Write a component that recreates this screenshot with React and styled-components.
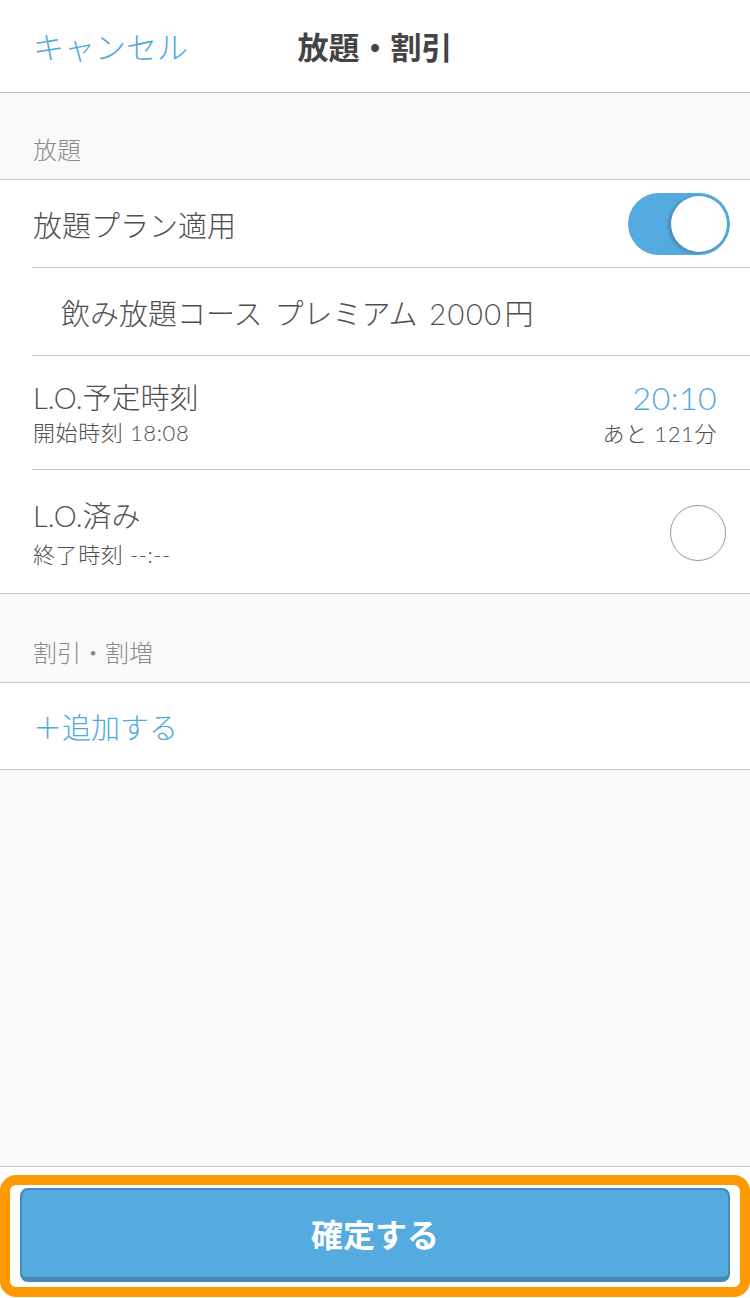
import React from 'react';
import styled, { createGlobalStyle } from 'styled-components';

const GlobalStyle = createGlobalStyle`
  html, body {
    margin: 0;
    padding: 0;
    background: #ffffff;
  }
  * {
    box-sizing: border-box;
    font-family: "Lato", "Noto Sans CJK JP", sans-serif;
  }
`;

const Page = styled.div`
  display: flex;
  flex-direction: column;
  height: 1298px;
  background: #f9f9f9;
`;

const Header = styled.div`
  display: grid;
  grid-template-columns: 1fr auto 1fr;
  align-items: center;
  height: 93px;
  padding-bottom: 2px;
  background: #ffffff;
  border-bottom: 1px solid #b8b8b8;
`;

const Cancel = styled.span`
  padding-left: 33px;
  font-size: 31px;
  font-weight: 300;
  color: #52a9dd;
`;

const Title = styled.h1`
  margin: 0;
  font-size: 31px;
  font-weight: 700;
  color: #444444;
`;

const SectionHead = styled.div`
  display: flex;
  align-items: flex-end;
  height: ${p => p.$h}px;
  padding: 0 0 13px 33px;
  font-size: 24px;
  font-weight: 300;
  color: #8a8a8a;
  border-bottom: 1px solid #c8c8c8;
`;

const Group = styled.div`
  background: #ffffff;
  border-bottom: 1px solid #c8c8c8;
`;

const Row = styled.div`
  display: flex;
  align-items: center;
  justify-content: space-between;
  height: ${p => p.$h}px;
  margin-left: 32px;
  padding-top: ${p => p.$top || 0}px;
  padding-left: ${p => p.$indent || 1}px;
  padding-right: 20px;
  border-bottom: ${p => (p.$last ? 'none' : '1px solid #c8c8c8')};
`;

const Label = styled.span`
  font-size: 29px;
  font-weight: 300;
  color: ${p => (p.$blue ? '#52a9dd' : '#4f4f4f')};
  word-spacing: 4px;
`;

const Num = styled.span`
  letter-spacing: 1.5px;
  margin-right: 2px;
`;

const Stack = styled.div`
  display: flex;
  flex-direction: column;
  align-items: ${p => (p.$right ? 'flex-end' : 'flex-start')};
  gap: ${p => p.$gap || 2}px;
`;

const Main = styled.span`
  font-size: 29px;
  font-weight: 300;
  line-height: 36px;
  color: #4f4f4f;
`;

const Time = styled.span`
  font-size: 32px;
  font-weight: 300;
  line-height: 38px;
  color: #4ea8dd;
  margin-right: 13px;
  letter-spacing: 0.5px;
`;

const Sub = styled.span`
  font-size: 22px;
  font-weight: 300;
  line-height: 30px;
  color: #4f4f4f;
  letter-spacing: 0.6px;
  margin-right: ${p => p.$mr || 0}px;
`;

const Toggle = styled.div`
  display: flex;
  justify-content: flex-end;
  align-items: center;
  width: 102px;
  height: 62px;
  padding: 3px;
  border-radius: 31px;
  background: #55abe0;
`;

const Knob = styled.div`
  width: 56px;
  height: 56px;
  border-radius: 50%;
  background: #ffffff;
  box-shadow: -2px 1px 4px rgba(0, 0, 0, 0.25);
`;

const Check = styled.div`
  width: 56px;
  height: 56px;
  margin-right: 4px;
  margin-top: -2px;
  border-radius: 50%;
  border: 1px solid #999999;
  background: #ffffff;
`;

const Filler = styled.div`
  flex: 1;
  border-bottom: 1px solid #c8c8c8;
`;

const Footer = styled.div`
  height: 131px;
  padding: 8px 0 1px;
  background: #ffffff;
`;

const Frame = styled.div`
  height: 100%;
  padding: 3px 10px 5px;
  border: 10px solid #ff9900;
  border-radius: 16px;
  background: #ffffff;
`;

const Confirm = styled.button`
  display: flex;
  align-items: center;
  justify-content: center;
  width: 100%;
  height: 100%;
  border: 2px solid #4589b9;
  border-bottom-width: 5px;
  border-radius: 8px;
  background: #55abe0;
  color: #ffffff;
  font-size: 32px;
  font-weight: 700;
  padding: 0 0 2px;
`;

export default function App() {
  return (
    <>
      <GlobalStyle />
      <Page>
        <Header>
          <Cancel>キャンセル</Cancel>
          <Title>放題・割引</Title>
          <span />
        </Header>

        <SectionHead $h={87}>放題</SectionHead>
        <Group>
          <Row $h={88}>
            <Label>放題プラン適用</Label>
            <Toggle>
              <Knob />
            </Toggle>
          </Row>
          <Row $h={88} $indent={29}>
            <Label>
              飲み放題コース プレミアム <Num>2000</Num>円
            </Label>
          </Row>
          <Row $h={114} $top={2}>
            <Stack $gap={2}>
              <Main>L.O.予定時刻</Main>
              <Sub>開始時刻 18:08</Sub>
            </Stack>
            <Stack $right $gap={2}>
              <Time>20:10</Time>
              <Sub $mr={13}>あと 121分</Sub>
            </Stack>
          </Row>
          <Row $h={123} $top={4} $last>
            <Stack $gap={6}>
              <Main>L.O.済み</Main>
              <Sub>終了時刻 --:--</Sub>
            </Stack>
            <Check />
          </Row>
        </Group>

        <SectionHead $h={89}>割引・割増</SectionHead>
        <Group>
          <Row $h={86} $last>
            <Label $blue>＋追加する</Label>
          </Row>
        </Group>

        <Filler />
        <Footer>
          <Frame>
            <Confirm>確定する</Confirm>
          </Frame>
        </Footer>
      </Page>
    </>
  );
}
